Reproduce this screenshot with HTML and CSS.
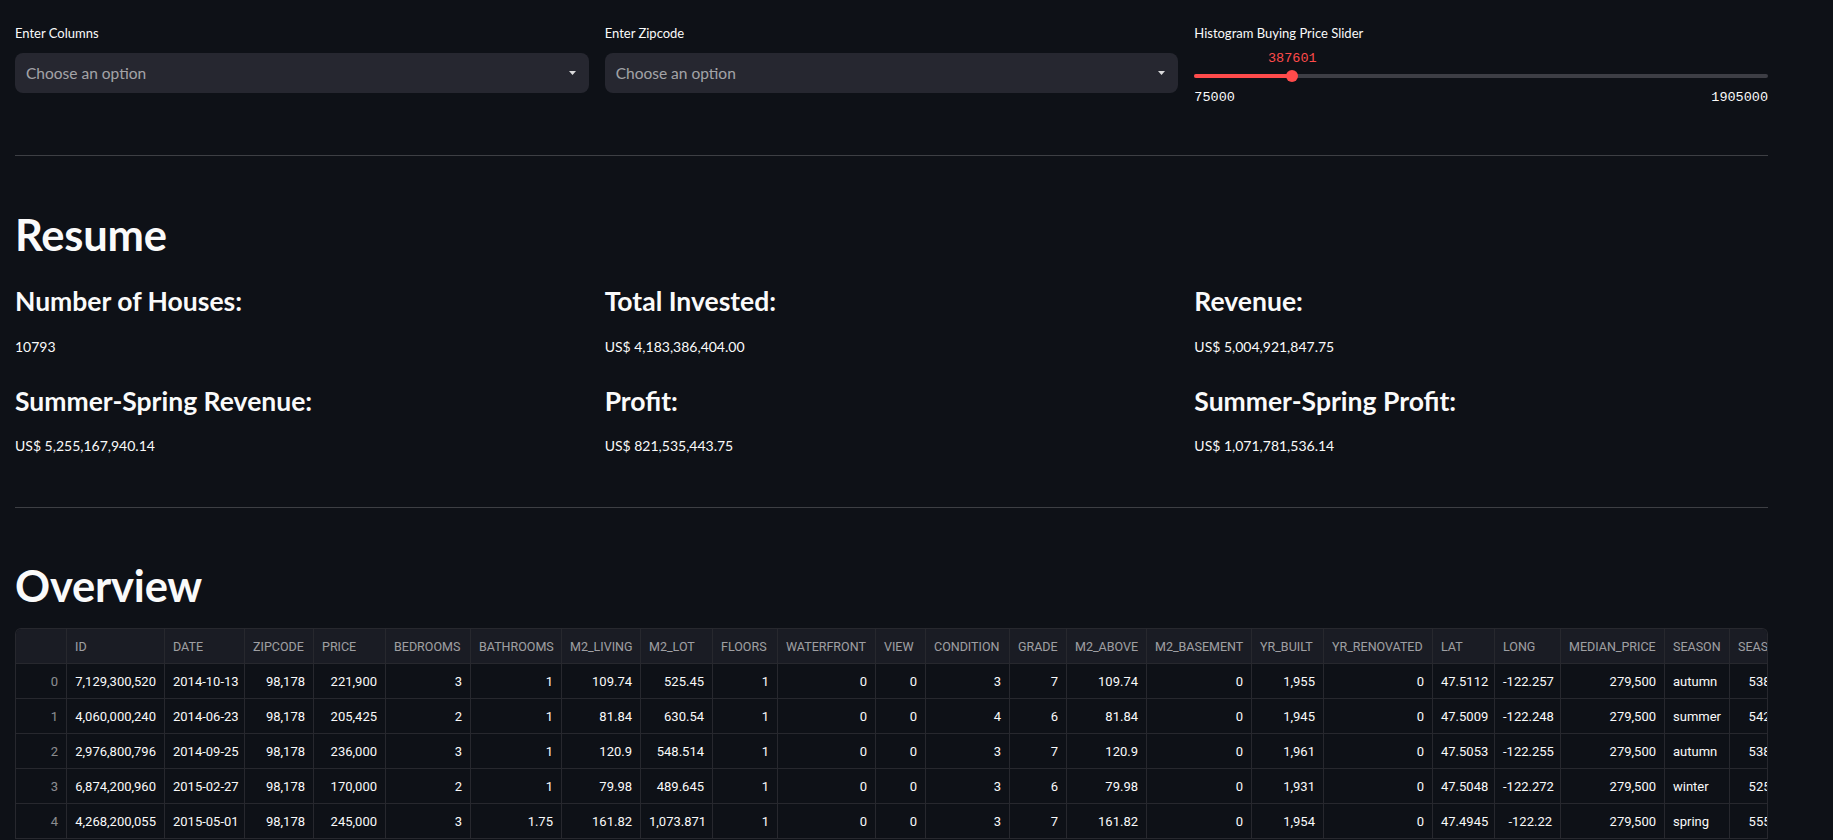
FILE: index.html
```html
<!DOCTYPE html>
<html lang="en">
<head>
<meta charset="utf-8">
<title>House Rocket</title>
<link rel="stylesheet" href="styles.css">
</head>
<body>
<main class="main">
  <section class="filters">
    <div class="field">
      <div class="label">Enter Columns</div>
      <div class="select">
        <span class="placeholder">Choose an option</span>
        <svg class="caret" width="7" height="4" viewBox="0 0 7 4"><path d="M0 0H7L3.5 4Z"/></svg>
      </div>
    </div>
    <div class="field">
      <div class="label">Enter Zipcode</div>
      <div class="select">
        <span class="placeholder">Choose an option</span>
        <svg class="caret" width="7" height="4" viewBox="0 0 7 4"><path d="M0 0H7L3.5 4Z"/></svg>
      </div>
    </div>
    <div class="field">
      <div class="label label-slider">Histogram Buying Price Slider</div>
      <div class="slider">
        <div class="slider-value-row"><span class="slider-value" style="left:17.08%">387601</span></div>
        <div class="track-row">
          <div class="track"><div class="track-fill" style="width:17.08%"></div></div>
          <div class="thumb" style="left:17.08%"></div>
        </div>
        <div class="ticks"><span>75000</span><span>1905000</span></div>
      </div>
    </div>
  </section>

  <hr class="divider divider-first">

  <h1 class="title">Resume</h1>
  <section class="metrics">
    <div class="metric-col">
      <div class="metric"><h3>Number of Houses:</h3><p>10793</p></div>
      <div class="metric"><h3>Summer-Spring Revenue:</h3><p>US$ 5,255,167,940.14</p></div>
    </div>
    <div class="metric-col">
      <div class="metric"><h3>Total Invested:</h3><p>US$ 4,183,386,404.00</p></div>
      <div class="metric"><h3>Profit:</h3><p>US$ 821,535,443.75</p></div>
    </div>
    <div class="metric-col">
      <div class="metric"><h3>Revenue:</h3><p>US$ 5,004,921,847.75</p></div>
      <div class="metric"><h3>Summer-Spring Profit:</h3><p>US$ 1,071,781,536.14</p></div>
    </div>
  </section>

  <hr class="divider divider-second">

  <h1 class="title title-overview">Overview</h1>
  <div class="table-wrap">
    <table class="grid">
      <colgroup>
        <col class="w-idx"><col class="w-id"><col class="w-date"><col class="w-zip"><col class="w-price">
        <col class="w-bed"><col class="w-bath"><col class="w-living"><col class="w-lot"><col class="w-floors">
        <col class="w-water"><col class="w-view"><col class="w-cond"><col class="w-grade"><col class="w-above">
        <col class="w-base"><col class="w-built"><col class="w-renov"><col class="w-lat"><col class="w-long">
        <col class="w-median"><col class="w-season"><col class="w-smedian">
      </colgroup>
      <thead>
        <tr>
          <th></th><th>ID</th><th>DATE</th><th>ZIPCODE</th><th>PRICE</th><th>BEDROOMS</th><th>BATHROOMS</th>
          <th>M2_LIVING</th><th>M2_LOT</th><th>FLOORS</th><th>WATERFRONT</th><th>VIEW</th><th>CONDITION</th>
          <th>GRADE</th><th>M2_ABOVE</th><th>M2_BASEMENT</th><th>YR_BUILT</th><th>YR_RENOVATED</th><th>LAT</th>
          <th>LONG</th><th>MEDIAN_PRICE</th><th>SEASON</th><th>SEASON_MEDIAN</th>
        </tr>
      </thead>
      <tbody>
        <tr>
          <td class="idx">0</td><td>7,129,300,520</td><td class="txt">2014-10-13</td><td>98,178</td><td>221,900</td><td>3</td><td>1</td>
          <td>109.74</td><td>525.45</td><td>1</td><td>0</td><td>0</td><td>3</td><td>7</td><td>109.74</td><td>0</td><td>1,955</td><td>0</td>
          <td>47.5112</td><td>-122.257</td><td>279,500</td><td class="txt">autumn</td><td>538,000</td>
        </tr>
        <tr>
          <td class="idx">1</td><td>4,060,000,240</td><td class="txt">2014-06-23</td><td>98,178</td><td>205,425</td><td>2</td><td>1</td>
          <td>81.84</td><td>630.54</td><td>1</td><td>0</td><td>0</td><td>4</td><td>6</td><td>81.84</td><td>0</td><td>1,945</td><td>0</td>
          <td>47.5009</td><td>-122.248</td><td>279,500</td><td class="txt">summer</td><td>542,500</td>
        </tr>
        <tr>
          <td class="idx">2</td><td>2,976,800,796</td><td class="txt">2014-09-25</td><td>98,178</td><td>236,000</td><td>3</td><td>1</td>
          <td>120.9</td><td>548.514</td><td>1</td><td>0</td><td>0</td><td>3</td><td>7</td><td>120.9</td><td>0</td><td>1,961</td><td>0</td>
          <td>47.5053</td><td>-122.255</td><td>279,500</td><td class="txt">autumn</td><td>538,000</td>
        </tr>
        <tr>
          <td class="idx">3</td><td>6,874,200,960</td><td class="txt">2015-02-27</td><td>98,178</td><td>170,000</td><td>2</td><td>1</td>
          <td>79.98</td><td>489.645</td><td>1</td><td>0</td><td>0</td><td>3</td><td>6</td><td>79.98</td><td>0</td><td>1,931</td><td>0</td>
          <td>47.5048</td><td>-122.272</td><td>279,500</td><td class="txt">winter</td><td>525,000</td>
        </tr>
        <tr>
          <td class="idx">4</td><td>4,268,200,055</td><td class="txt">2015-05-01</td><td>98,178</td><td>245,000</td><td>3</td><td>1.75</td>
          <td>161.82</td><td>1,073.871</td><td>1</td><td>0</td><td>0</td><td>3</td><td>7</td><td>161.82</td><td>0</td><td>1,954</td><td>0</td>
          <td>47.4945</td><td>-122.22</td><td>279,500</td><td class="txt">spring</td><td>555,000</td>
        </tr>
      </tbody>
    </table>
  </div>
</main>
</body>
</html>
```

FILE: styles.css
```css
* { box-sizing: border-box; }

html, body {
  margin: 0;
  background: #0e1117;
  color: #fafafa;
  font-family: Lato, "Noto Sans", sans-serif;
  overflow: hidden;
}

.main {
  width: 1753px;
  margin-left: 15px;
  padding-top: 22px;
}

/* ---------- filters ---------- */
.filters {
  display: grid;
  grid-template-columns: repeat(3, 1fr);
  gap: 16px;
  align-items: start;
}

.label {
  font-size: 13px;
  line-height: 22px;
  margin-bottom: 9px;
  color: #fafafa;
}

.label-slider { margin-bottom: 5px; }

.select {
  height: 40px;
  background: #262730;
  border-radius: 8px;
  display: flex;
  align-items: center;
  justify-content: space-between;
  padding: 0 13px 0 11px;
}

.placeholder {
  font-size: 15.5px;
  color: rgba(250, 250, 250, 0.6);
}

.caret path { fill: rgba(250, 250, 250, 0.85); }

.slider { display: flex; flex-direction: column; }

.slider-value-row {
  position: relative;
  height: 20px;
}

.slider-value {
  position: absolute;
  top: 0;
  transform: translateX(-50%);
  font-family: "Liberation Mono", "DejaVu Sans Mono", monospace;
  font-size: 13.5px;
  line-height: 20px;
  color: #ff4b4b;
}

.track-row {
  position: relative;
  height: 12px;
  margin-top: 1px;
  display: flex;
  align-items: center;
}

.track {
  width: 100%;
  height: 4px;
  border-radius: 2px;
  background: #3d3e45;
  overflow: hidden;
}

.track-fill {
  height: 100%;
  background: #ff4b4b;
}

.thumb {
  position: absolute;
  top: 0;
  width: 12px;
  height: 12px;
  margin-left: -6px;
  border-radius: 50%;
  background: #ff4b4b;
}

.ticks {
  margin-top: 6px;
  display: flex;
  justify-content: space-between;
  font-family: "Liberation Mono", "DejaVu Sans Mono", monospace;
  font-size: 13.5px;
  line-height: 20px;
  color: #fafafa;
}

/* ---------- dividers ---------- */
.divider {
  border: none;
  height: 1px;
  background: rgba(250, 250, 250, 0.2);
  margin: 0;
}

.divider-first { margin-top: 47px; }
.divider-second { margin-top: 49px; }

/* ---------- headings ---------- */
.title {
  margin: 50px 0 0;
  font-size: 43.5px;
  font-weight: 700;
  line-height: 56px;
  letter-spacing: -0.2px;
}

.title-overview { margin-top: 49px; }

/* ---------- metrics ---------- */
.metrics {
  margin-top: 19px;
  display: grid;
  grid-template-columns: repeat(3, 1fr);
  gap: 16px;
}

.metric + .metric { margin-top: 22px; }

.metric h3 {
  margin: 0;
  font-size: 26.5px;
  font-weight: 700;
  line-height: 40px;
}

.metric p {
  margin: 14px 0 0;
  font-size: 14px;
  line-height: 24px;
}

.metric + .metric p { margin-top: 13px; }

/* ---------- table ---------- */
.table-wrap {
  margin-top: 15px;
  width: 1753px;
  border: 1px solid #27282e;
  border-bottom: none;
  border-radius: 6px 6px 0 0;
  overflow: hidden;
}

.grid {
  table-layout: fixed;
  width: 1788px;
  border-collapse: separate;
  border-spacing: 0;
  font-family: Roboto, "Noto Sans", sans-serif;
}

.grid th, .grid td {
  height: 35px;
  padding: 0 8px;
  border-right: 1px solid #27282e;
  border-bottom: 1px solid #27282e;
  white-space: nowrap;
  overflow: hidden;
}

.grid th {
  background: #1a1c24;
  color: rgba(250, 250, 250, 0.6);
  font-weight: 400;
  font-size: 12.5px;
  text-align: left;
}

.grid td {
  font-size: 13px;
  text-align: right;
  color: #fafafa;
}

.grid td.txt { text-align: left; }
.grid td.idx { color: rgba(250, 250, 250, 0.55); }

.w-idx { width: 51px; }
.w-id { width: 98px; }
.w-date { width: 80px; }
.w-zip { width: 69px; }
.w-price { width: 72px; }
.w-bed { width: 85px; }
.w-bath { width: 91px; }
.w-living { width: 79px; }
.w-lot { width: 72px; }
.w-floors { width: 65px; }
.w-water { width: 98px; }
.w-view { width: 50px; }
.w-cond { width: 84px; }
.w-grade { width: 57px; }
.w-above { width: 80px; }
.w-base { width: 105px; }
.w-built { width: 72px; }
.w-renov { width: 109px; }
.w-lat { width: 62px; }
.w-long { width: 66px; }
.w-median { width: 104px; }
.w-season { width: 65px; }
.w-smedian { width: 74px; }
```
